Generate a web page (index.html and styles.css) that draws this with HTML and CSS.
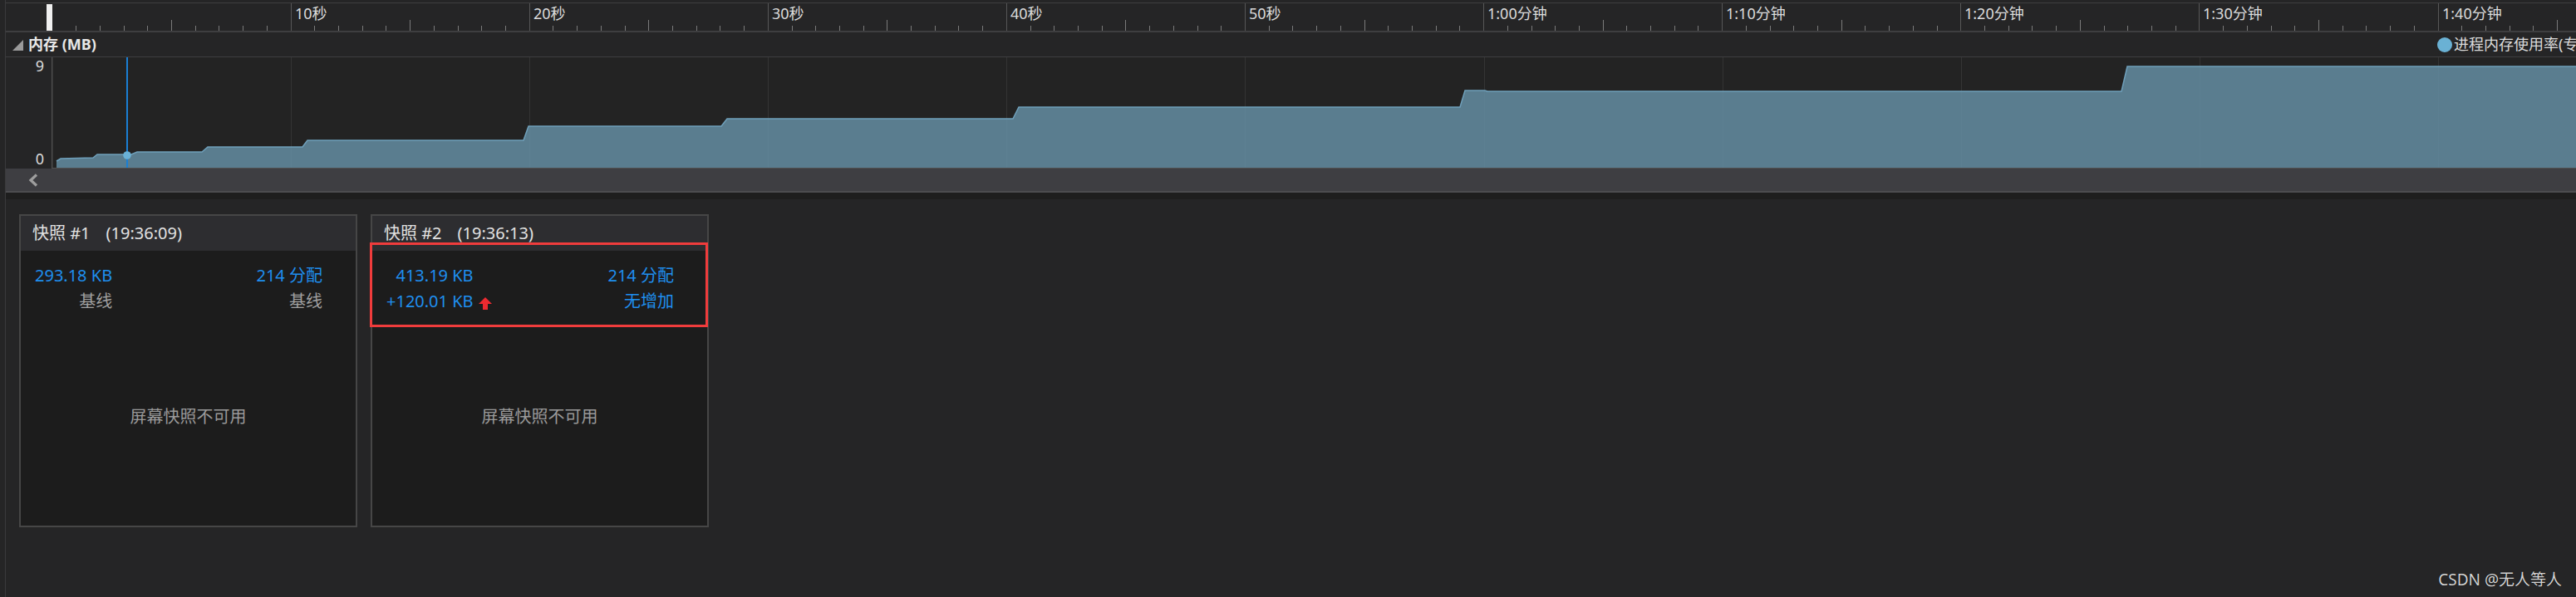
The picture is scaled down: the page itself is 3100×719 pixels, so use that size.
FILE: index.html
```html
<!DOCTYPE html>
<html lang="zh-CN">
<head>
<meta charset="utf-8">
<title>内存使用率 - 快照</title>
<link rel="stylesheet" href="styles.css">
</head>
<body>
<div class="app">
  <div class="main">
    <div class="ruler">
      <div class="marker"></div>
      <svg class="scale" viewBox="63 4 3037 33" width="3037" height="33">
        <path class="tick-major" d="M350.5 4V37M637.5 4V37M924.5 4V37M1211.5 4V37M1498.5 4V37M1785.5 4V37M2072.5 4V37M2359.5 4V37M2646.5 4V37M2934.5 4V37"/>
        <path class="tick" d="M206.5 24V37M493.5 24V37M780.5 24V37M1067.5 24V37M1354.5 24V37M1642.5 24V37M1929.5 24V37M2216.5 24V37M2503.5 24V37M2790.5 24V37M3077.5 24V37"/>
        <path class="tick" d="M91.5 31V37M120.5 31V37M149.5 31V37M177.5 31V37M235.5 31V37M263.5 31V37M292.5 31V37M321.5 31V37M378.5 31V37M407.5 31V37M436.5 31V37M464.5 31V37M522.5 31V37M551.5 31V37M579.5 31V37M608.5 31V37M665.5 31V37M694.5 31V37M723.5 31V37M752.5 31V37M809.5 31V37M838.5 31V37M866.5 31V37M895.5 31V37M953.5 31V37M981.5 31V37M1010.5 31V37M1039.5 31V37M1096.5 31V37M1125.5 31V37M1153.5 31V37M1182.5 31V37M1240.5 31V37M1268.5 31V37M1297.5 31V37M1326.5 31V37M1383.5 31V37M1412.5 31V37M1441.5 31V37M1469.5 31V37M1527.5 31V37M1555.5 31V37M1584.5 31V37M1613.5 31V37M1670.5 31V37M1699.5 31V37M1728.5 31V37M1756.5 31V37M1814.5 31V37M1843.5 31V37M1871.5 31V37M1900.5 31V37M1957.5 31V37M1986.5 31V37M2015.5 31V37M2043.5 31V37M2101.5 31V37M2130.5 31V37M2158.5 31V37M2187.5 31V37M2244.5 31V37M2273.5 31V37M2302.5 31V37M2331.5 31V37M2388.5 31V37M2417.5 31V37M2445.5 31V37M2474.5 31V37M2532.5 31V37M2560.5 31V37M2589.5 31V37M2618.5 31V37M2675.5 31V37M2704.5 31V37M2733.5 31V37M2761.5 31V37M2819.5 31V37M2847.5 31V37M2876.5 31V37M2905.5 31V37M2962.5 31V37M2991.5 31V37M3020.5 31V37M3048.5 31V37"/>
        <text x="355" y="23">10秒</text>
        <text x="642" y="23">20秒</text>
        <text x="929" y="23">30秒</text>
        <text x="1216" y="23">40秒</text>
        <text x="1503" y="23">50秒</text>
        <text x="1790" y="23">1:00分钟</text>
        <text x="2077" y="23">1:10分钟</text>
        <text x="2364" y="23">1:20分钟</text>
        <text x="2651" y="23">1:30分钟</text>
        <text x="2939" y="23">1:40分钟</text>
      </svg>
    </div>

    <div class="track-head">
      <div class="track-title"><span class="tri"></span><span>内存 (MB)</span></div>
      <div class="legend"><span class="dot"></span><span>进程内存使用率(专用，MB)</span></div>
    </div>

    <div class="graph">
      <div class="yaxis"><span>9</span><span>0</span></div>
      <div class="plot">
        <svg viewBox="63 69 3037 133" width="3037" height="133" preserveAspectRatio="none">
          <polygon class="area" points="68,202 68,194 73,191 112,190 117,186 158,186 165,183 243,183 250,177 364,177 370,169 630,169 636,152 868,152 875,143 1219,143 1226,129 1757,129 1763,109 1787,109 1790,110 2553,110 2560,80 3100,80 3100,202"/>
          <polyline class="edge" points="68,194 73,191 112,190 117,186 158,186 165,183 243,183 250,177 364,177 370,169 630,169 636,152 868,152 875,143 1219,143 1226,129 1757,129 1763,109 1787,109 1790,110 2553,110 2560,80 3100,80"/>
          <line class="cursor" x1="153" y1="69" x2="153" y2="202"/>
          <circle class="cursor-dot" cx="153" cy="187" r="4.8"/>
        </svg>
      </div>
    </div>

    <div class="hscroll">
      <svg class="chev" width="14" height="16" viewBox="0 0 14 16"><polyline points="11,1.5 4,8 11,14.5"/></svg>
    </div>
    <div class="splitter"></div>

    <div class="snapshots">
      <div class="card">
        <div class="card-head">快照 #1<span class="time">(19:36:09)</span></div>
        <div class="card-body">
          <div class="stats">
            <div class="col-left">
              <span class="num">293.18 KB</span>
              <span class="sub">基线</span>
            </div>
            <div class="col-right">
              <span class="num">214 分配</span>
              <span class="sub">基线</span>
            </div>
          </div>
          <div class="empty">屏幕快照不可用</div>
        </div>
      </div>

      <div class="card">
        <div class="card-head">快照 #2<span class="time">(19:36:13)</span></div>
        <div class="card-body">
          <div class="stats">
            <div class="col-left with-arrow">
              <span class="num">413.19 KB</span>
              <span></span>
              <span class="num">+120.01 KB</span>
              <svg class="up" width="16" height="15" viewBox="0 0 16 15"><polygon points="8,0 16,8 11,8 11,15 5,15 5,8 0,8"/></svg>
            </div>
            <div class="col-right">
              <span class="num">214 分配</span>
              <span class="num">无增加</span>
            </div>
          </div>
          <div class="empty">屏幕快照不可用</div>
        </div>
        <div class="highlight"></div>
      </div>
    </div>
  </div>
  <div class="watermark">CSDN @无人等人</div>
</div>
</body>
</html>
```
FILE: styles.css
```css
html, body {
  margin: 0;
  padding: 0;
}
body {
  width: 3100px;
  height: 719px;
  overflow: hidden;
  background: #252526;
  font-family: "Noto Sans", "Noto Sans CJK SC", sans-serif;
  color: #dcdcdc;
}
.app {
  position: relative;
  height: 719px;
  padding-left: 6px;
  box-sizing: border-box;
}
.main {
  height: 100%;
  border-left: 1px solid #3a3a3c;
  padding-top: 3px;
  box-sizing: border-box;
}

/* time ruler */
.ruler {
  display: flex;
  height: 33px;
  border-top: 1px solid #3e3e40;
  border-bottom: 2px solid #3e3e40;
  padding-left: 49px;
}
.marker {
  width: 7px;
  margin-top: 1px;
  background: #f0f0f0;
}
.scale {
  display: block;
  flex: none;
  overflow: hidden;
}
.scale .tick {
  stroke: #7a7a7a;
  stroke-width: 1;
  fill: none;
}
.scale .tick-major {
  stroke: #575757;
  stroke-width: 1;
  fill: none;
}
.scale text {
  font-family: "Noto Sans", "Noto Sans CJK SC", sans-serif;
  font-size: 18px;
  fill: #dcdcdc;
}

/* track header */
.track-head {
  display: grid;
  grid-template-columns: 2926px max-content;
  height: 29px;
  line-height: 29px;
  font-size: 18px;
  border-bottom: 1px solid #3e3e40;
  overflow: hidden;
}
.track-title {
  display: flex;
  padding-left: 8px;
  font-weight: bold;
  color: #e8e8e8;
}
.tri {
  width: 0;
  height: 0;
  border-left: 13px solid transparent;
  border-bottom: 13px solid #9a9a9a;
  margin: 9px 6px 0 0;
}
.legend {
  display: flex;
  align-items: center;
  gap: 2px;
  color: #dcdcdc;
  white-space: nowrap;
}
.dot {
  width: 18px;
  height: 18px;
  border-radius: 50%;
  background: #6ab1d4;
}

/* graph */
.graph {
  display: flex;
  height: 134px;
}
.yaxis {
  width: 55px;
  box-sizing: border-box;
  padding: 0 9px 2px 0;
  display: flex;
  flex-direction: column;
  justify-content: space-between;
  align-items: flex-end;
  font-size: 18px;
  line-height: 20px;
  color: #dcdcdc;
}
.plot {
  flex: 1;
  border-left: 1px solid #505050;
  border-bottom: 1px solid #505050;
  background-color: #232323;
  background-image: repeating-linear-gradient(90deg, #343434 0 1px, transparent 1px 287.1px);
  overflow: hidden;
}
.plot svg {
  display: block;
}
.area {
  fill: #6893aa;
  fill-opacity: 0.8;
}
.edge {
  fill: none;
  stroke: #6fa0bb;
  stroke-width: 1.5;
}
.cursor {
  stroke: #1a7fd4;
  stroke-width: 2;
}
.cursor-dot {
  fill: #6ab1d6;
}

/* scrollbar */
.hscroll {
  height: 27px;
  background: #3e3e42;
  display: flex;
  align-items: center;
  padding-left: 26px;
}
.chev polyline {
  fill: none;
  stroke: #9e9e9e;
  stroke-width: 3.2;
}
.splitter {
  height: 8px;
  border-top: 2px solid #4d4d50;
  background: #1e1e1e;
}

/* snapshot cards */
.snapshots {
  display: flex;
  gap: 16px;
  padding: 18px 0 0 16px;
}
.card {
  position: relative;
  width: 407px;
  height: 377px;
  box-sizing: border-box;
  border: 2px solid #464646;
  background: #1c1c1c;
  display: flex;
  flex-direction: column;
  font-size: 20px;
}
.card-head {
  height: 42px;
  line-height: 42px;
  padding-left: 14px;
  background: #2d2d30;
  color: #e2e2e2;
  white-space: nowrap;
}
.time {
  margin-left: 19px;
}
.card-body {
  flex: 1;
  display: flex;
  flex-direction: column;
  padding: 14px 40px 0 17px;
}
.stats {
  display: flex;
  justify-content: space-between;
  line-height: 31px;
  white-space: nowrap;
}
.col-left,
.col-right {
  display: grid;
  justify-items: end;
}
.col-left.with-arrow {
  grid-template-columns: auto auto;
  column-gap: 6px;
}
.num {
  color: #1f8fef;
}
.sub {
  color: #a0a0a0;
}
.up {
  display: block;
  margin-top: 11px;
  justify-self: start;
}
.up polygon {
  fill: #ec2a30;
}
.empty {
  flex: 1;
  display: flex;
  align-items: center;
  justify-content: center;
  padding: 0 0 11px 0;
  margin-left: -17px;
  margin-right: -40px;
  color: #9a9a9a;
}
.highlight {
  position: absolute;
  left: -3px;
  top: 32px;
  width: 407px;
  height: 102px;
  box-sizing: border-box;
  border: 3px solid #f03c3c;
}

/* watermark */
.watermark {
  position: absolute;
  right: 17px;
  bottom: 11px;
  font-size: 19px;
  line-height: 19px;
  color: #d4d4d4;
  text-shadow: 0 0 1px #000;
  white-space: nowrap;
}
```
